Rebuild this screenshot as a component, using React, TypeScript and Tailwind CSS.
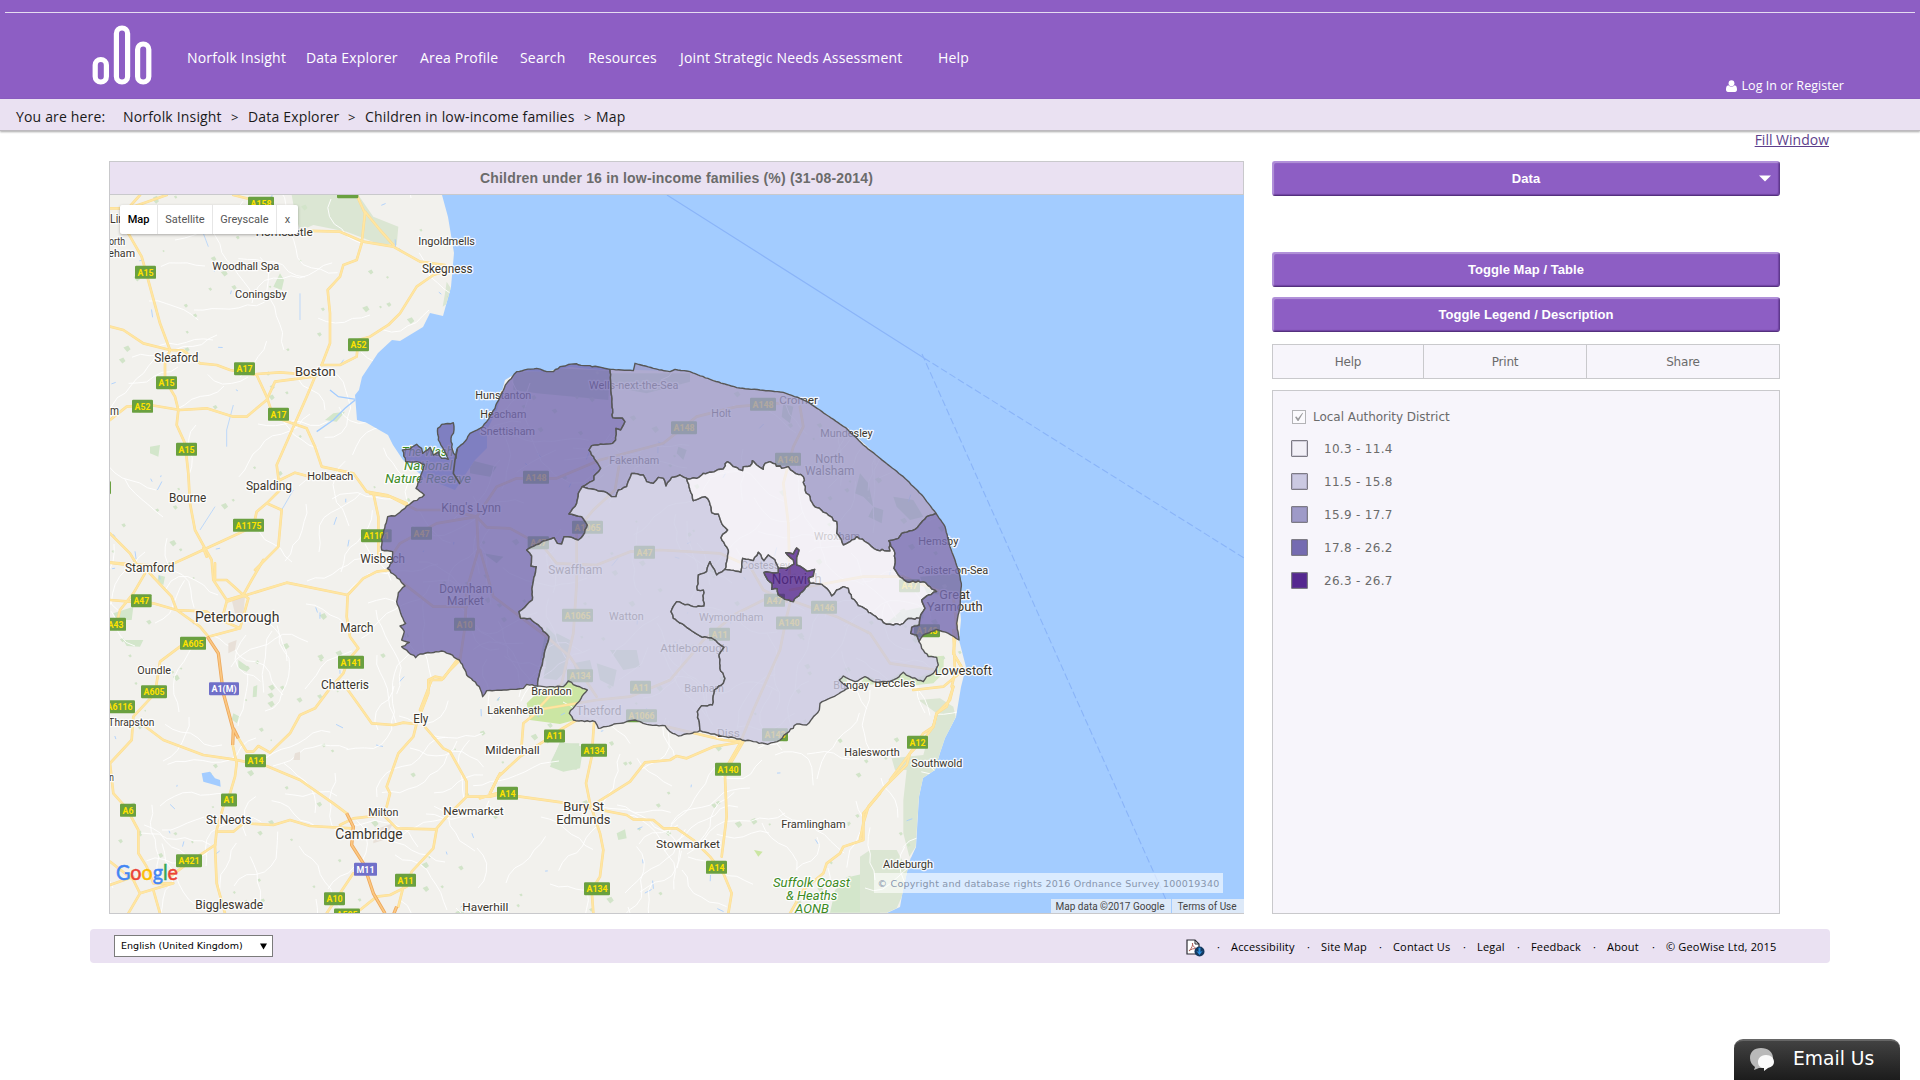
import React from "react";

type Pt = [number, number];

/* ---------- geometry helpers ---------- */

const rng = (seed: number) => {
  let s = seed;
  return () => {
    s = (s * 1664525 + 1013904223) % 4294967296;
    return s / 4294967296;
  };
};

const pts = (s: string): Pt[] =>
  s.trim().split(/\s+/).map((p) => p.split(",").map(Number) as Pt);

/* Adds small wobbles between surveyed points so borders look natural. */
const rough = (s: string, amp = 5): Pt[] => {
  const p = pts(s);
  const r = rng(p.length * 7919 + Math.abs(p[0][0]));
  const out: Pt[] = [p[0]];
  for (let i = 1; i < p.length; i++) {
    const [ax, ay] = p[i - 1];
    const [bx, by] = p[i];
    const n = Math.max(1, Math.floor(Math.hypot(bx - ax, by - ay) / 8));
    for (let k = 1; k < n; k++) {
      const t = k / n;
      out.push([ax + (bx - ax) * t + (r() - 0.5) * amp, ay + (by - ay) * t + (r() - 0.5) * amp]);
    }
    out.push(p[i]);
  }
  return out;
};
const rev = (p: Pt[]) => [...p].reverse();
const ring = (...e: Pt[][]) =>
  "M" + e.flat().map(([x, y]) => x.toFixed(1) + "," + y.toFixed(1)).join("L") + "Z";

/* ---------- district borders ---------- */

const westCoast = rough(
  "503,1008 470,1003 460,1015 430,1018 410,1020 350,1022 338,1040 328,1010 290,975 268,930 240,912 215,903 150,912 137,923 95,890 118,877 95,870 103,845 90,828 107,820 92,790 80,755 85,728 105,708 70,672 52,655 68,635 68,605 35,600 37,560 53,500 75,498 110,468 163,435 138,415 150,385 163,345 140,335 107,335 97,300 120,297 140,283 155,295 158,310 180,292 190,315 205,305 215,325 235,328 222,300 205,270 203,235 215,223 250,218 252,240 243,265 248,300 258,325 262,295 280,280 300,250 330,235 350,215 375,175 395,130 410,100 440,65 500,55 530,65 550,65 570,50 610,42 660,47 720,58",
  4
);
const westNorth = rough(
  "720,58 728,203 757,204 765,215 752,240 738,235 737,270 728,280 700,283 665,287 657,300 692,355 672,378 672,390 637,410",
  3
);
const westBreck = rough(
  "637,410 625,430 620,460 597,492 635,500 652,525 640,555 625,570 605,562 582,560 575,582 562,580 552,563 520,573 470,600 485,618 483,648 499,650 487,710 487,750 470,765 447,785 452,805 480,805 510,830 537,860 522,920 505,985 503,1008",
  3
);
const northCoast = rough(
  "720,58 790,62 795,40 850,55 900,65 915,58 960,65 1030,92 1100,113 1170,120 1240,127 1290,145 1320,160 1370,195 1430,235 1480,285 1530,325 1600,380 1660,440 1698,490",
  1.5
);
const northYar = rough("1698,490 1670,500 1635,538 1595,550 1585,565 1557,572", 3);
const northBroad = rough(
  "1557,572 1560,603 1520,600 1500,585 1460,560 1440,575 1420,585 1400,550 1400,515 1370,490 1330,465 1320,440 1305,420 1300,380 1270,365 1255,350 1235,355 1200,335 1185,340 1180,358 1160,345 1147,332 1140,348 1120,350 1118,362 1090,350 1072,335 1060,357 1000,370 980,385 950,385",
  6
);
const northBreck = rough(
  "950,385 930,375 905,382 888,408 880,385 865,382 850,400 830,395 820,375 785,370 770,410 745,420 738,440 725,440 710,428 637,410",
  3
);
const broadBreck = rough(
  "950,385 960,420 970,452 1005,440 1018,455 1025,488 1045,492 1055,520 1073,540 1053,563 1075,600 1065,658",
  4
);
const breckSouth = rough(
  "1065,658 1040,675 1020,635 1010,665 985,675 982,720 1000,720 1002,768 970,770 920,755 903,785 910,805 950,832 990,858 1030,867 1062,892 1047,915 1050,955 1065,985 1060,1000 1033,1020 1027,1065 995,1067 982,1085 990,1142",
  4
);
const breckFoot = rough(
  "990,1142 925,1158 900,1145 885,1127 830,1123 795,1110 750,1120 685,1135 675,1115 610,1110 598,1090 652,1020 620,1008 595,993 580,1010 540,1010 503,1008",
  4
);
const broadSouthW = rough("1065,658 1113,667 1118,625 1150,632 1165,607 1182,632 1195,615 1215,630 1225,655", 3);
const norwichN = rough(
  "1225,655 1250,655 1272,642 1270,630 1260,622 1247,608 1270,612 1280,594 1287,600 1280,622 1280,645 1300,655 1312,664 1334,658 1330,678 1315,685 1320,700",
  3
);
const norwichS = rough(
  "1320,700 1297,725 1270,755 1245,748 1225,735 1222,716 1205,718 1206,700 1193,690 1182,667 1200,667 1225,668 1225,655",
  4
);
const broadSouthE = rough(
  "1320,700 1355,703 1370,715 1385,738 1400,720 1420,710 1435,715 1445,745 1475,770 1510,795 1540,818 1570,825 1600,820 1615,805 1650,805",
  6
);
const broadYar = rough(
  "1557,572 1575,610 1572,655 1585,675 1610,695 1660,695 1700,725 1675,735 1655,750 1665,775 1650,805"
);
const yarSouth = rough("1650,805 1648,825 1625,832 1622,850 1640,855 1647,875", 3);
const yarFoot = rough("1647,875 1660,855 1700,838 1735,850 1767,870", 2);
const yarCoast = rough(
  "1698,490 1725,530 1740,590 1755,630 1766,665 1774,700 1770,770 1760,820 1767,870",
  1.5
);
const southFoot = rough(
  "1647,875 1655,895 1675,920 1700,922 1705,945 1690,970 1670,980 1660,995 1620,980 1600,967 1580,985 1550,995 1510,995 1485,980 1455,995 1420,978 1408,990 1435,1015 1400,1035 1350,1060 1348,1080 1310,1125 1280,1122 1250,1150 1230,1170 1193,1183 1150,1175 1110,1167 1040,1155 990,1142",
  4
);

const districts = [
  { fill: "#756bb1", d: ring(westCoast, westNorth, westBreck) },
  { fill: "#9e9ac8", d: ring(northCoast, northYar, northBroad, northBreck, rev(westNorth)) },
  { fill: "#cbc9e2", d: ring(broadBreck, breckSouth, breckFoot, rev(westBreck), rev(northBreck)) },
  { fill: "#f2f0f7", d: ring(rev(northBroad), broadYar, rev(broadSouthE), rev(norwichN), rev(broadSouthW), rev(broadBreck)) },
  { fill: "#cbc9e2", d: ring(broadSouthW, rev(norwichS), broadSouthE, yarSouth, southFoot, rev(breckSouth)) },
  { fill: "#756bb1", d: ring(yarCoast, rev(yarFoot), rev(yarSouth), rev(broadYar), rev(northYar)) },
  { fill: "#54278f", d: ring(norwichN, norwichS) },
];

/* ---------- map sheets: survey sheets at 3:1 ---------- */

const sheets: Record<string, Pt> = {
  nw: [100, 190],
  sw: [100, 560],
  west: [370, 350],
  north: [660, 350],
  mid: [540, 540],
  south: [480, 690],
  east: [860, 690],
};
const sheetTransform = (k: string) =>
  `translate(${sheets[k][0]} ${sheets[k][1]}) scale(0.33333)`;

const roads: [string, string][] = [
  ["nw", "M85,130L125,200L150,290L180,400L210,480L195,520L195,570L225,620L235,660L230,705L255,760L265,850L270,940L285,1020L315,1075L335,1110L340,1170L380,1230L430,1215"],
  ["nw", "M210,480L250,482L300,520L350,525L390,540L470,555L500,620L520,680L620,715L645,770L665,830L760,850L800,905L860,915L920,940"],
  ["nw", "M30,690L80,650L150,645L240,660L320,655L400,680L440,680L500,630L525,575L640,560M470,552L540,547L640,555M665,525L720,525L770,500L775,450L810,440L865,405L900,370L950,290L1000,255L1045,240"],
  ["nw", "M645,560L620,620L585,700L530,825L540,900L500,940L545,960L535,1070L465,1140M540,870L585,848L630,860M530,910L500,940L470,965L460,1010L385,1045L320,1075L265,1100L200,1130L30,1118"],
  ["nw", "M665,525L690,460L690,370L683,300L720,260L730,225L770,210L785,160L795,70L770,15M600,122L720,125L790,155L880,170L960,215L1035,225M795,65L840,120L880,165"],
  ["nw", "M30,410L70,420L130,460L210,480M30,1030L90,1090L120,1140M30,55L85,55L130,40L200,15M85,130L80,60L120,15M820,910L835,980L835,1110M310,1075L320,1100M400,15L460,30"],
  ["sw", "M135,40L100,100L60,150L50,190M140,30L215,110L230,150L300,200L325,230M30,120L90,125L160,130L230,150L320,155L340,170L420,205M325,230L420,205L445,115L430,105L380,60L345,60M30,8L120,20M345,10L345,60"],
  ["sw", "M398,555L410,610L405,650L390,700L370,740L350,810L345,860L350,970L375,1060M400,510L440,575L460,575L475,558L510,578L570,520L600,465L645,445L690,385L730,340L745,300L775,265L750,230L740,170L743,105L560,68L440,105L380,125L365,180M430,105L455,60L490,0"],
  ["sw", "M743,105L790,55L830,35L870,30M130,495L190,540L310,585L400,598L500,618L600,660L700,730L740,760M240,260L180,305L165,400L100,470L95,540L30,610L40,700L80,745L115,810L115,880L140,920L160,970L220,970L120,1000L85,1060M120,1000L100,960L30,905M160,990L180,1060"],
  ["sw", "M345,855L270,905L210,950M100,950L30,975M355,815L400,815L430,790L520,795L570,780L630,798L755,805M720,795L760,775L850,765L890,805L1010,808L1000,865L935,935L920,980L870,1005L830,1010L780,1050M910,980L895,1040"],
  ["sw", "M860,740L870,700L860,680L895,580L940,530L950,490L985,400L985,360L1005,350L1030,355L1075,295M970,495L1030,565L1050,575L1100,665L1100,710L1170,710L1230,695M1010,805L1040,770L1100,710M740,385L780,440L815,490L880,495L910,488L945,492M760,940L720,1000L680,1060M1200,640L1170,700"],
  ["west", "M0,430L60,440L110,465L140,480L230,480L320,500L350,532L420,535L520,590L560,640L680,645L780,605L870,600L1050,610L1140,650L1180,720L1250,755M320,500L325,600L290,720L285,830L270,930L240,960L215,990L185,990L150,1080"],
  ["west", "M70,610L90,580L200,520L320,500L380,410L440,385L560,385L690,330L880,280L980,200L1100,170L1280,155M750,330L735,420L670,480L620,540L620,700L610,850L575,1000L510,1070M100,700L190,770L290,770M330,600L370,740L450,800L530,860L600,920L680,1040"],
  ["west", "M500,1080L680,1050L780,1040L900,990L960,920L1000,870L1100,790L1200,740M1290,170L1300,230L1270,290L1240,400L1255,520L1260,700M1260,760L1250,800L1230,900L1150,1080L1110,1180L1070,1250M1260,750L1400,800L1500,850L1560,940L1700,960M1260,720L1480,680L1600,680L1750,740L1760,830L1750,910L1780,960"],
  ["mid", "M1240,340L1270,390L1210,440L1120,450M1240,440L1230,480L1190,520L1180,560L1150,600L1110,640L1050,720M1240,270L1245,400L1235,440"],
  ["south", "M342,100L335,200L318,280L330,340L360,430L370,480L360,560L335,600L340,670M0,325L50,310L120,320L250,338L440,375L460,388L520,390L550,415L590,415L640,450L690,500L730,550L755,610L745,670"],
  ["south", "M355,335L450,275L495,217L570,210L590,198L620,205L700,170L730,165L790,155L755,215L735,260L740,380L725,500M790,155L730,150L560,110M290,90L240,120L190,155L120,200L55,260L30,310M125,165L130,100L180,60M1200,310L1150,370L1150,450L1090,470L1080,490L1040,520L1030,550L970,600L930,670"],
  ["east", "M280,-10L260,50L230,70L220,110L190,130L150,190L140,225L75,290L25,350L10,400L0,450"],
];
const motorways: [string, string][] = [
  ["sw", "M322,230L355,280L370,400L400,510L398,555M400,505L415,535M740,760L760,800L755,855L790,910L820,1000L855,1060M890,1040L880,1065"],
];

const parks: [string, string, string][] = [
  ["nw", "#dbe6d3", "M575,15L775,15L820,80L895,110L890,165L830,160L740,125L640,105L600,122L585,70Z"],
  ["nw", "#dbe6d3", "M1040,275L1056,300L1050,335L1028,350L1035,310Z"],
  ["nw", "#d3e6cb", "M700,670L735,665L710,695L675,690Z M540,250L552,270L545,300L520,290Z M150,770L180,765L175,800L150,790Z"],
  ["sw", "#d3e6cb", "M40,160L100,140L95,180L50,180Z M70,240L130,240L120,260L80,258Z M415,300L450,325L440,335L415,325Z M460,380L472,375L470,410L458,412Z M175,45L195,50L190,75L172,65Z M400,460L420,470L410,490L395,478Z"],
  ["mid", "#cbe6a3", "M85,425L142,450L88,520L105,540L60,552L-30,540L-40,490L0,450Z"],
  ["mid", "#d6e9c4", "M1140,305L1165,350L1212,347L1210,400L1180,430L1110,437L1080,430L1030,432L960,435L975,408L1040,425L1090,393L1130,415L1190,390L1190,355L1160,340Z"],
  ["mid", "#d3e3cc", "M60,610L118,610L110,690L30,670Z M895,410L915,405L925,435L900,425Z"],
  ["mid", "#c9dfc0", "M1080,215L1150,200L1150,235L1040,250Z M80,380L0,360L20,260L60,300Z"],
  ["south", "#d3e6cb", "M240,155L310,170L300,235L250,245L210,230Z M410,430L435,418L440,445L415,450Z M1065,600L1110,560L1200,540V668H1050Z"],
  ["south", "#cbe6a3", "M822,480L848,485L835,500Z"],
  ["east", "#dbe6d3", "M175,30L240,25L280,50L287,80L240,190L225,240L190,265L177,320L167,470L148,500L130,430L130,330L140,240L105,240L95,205L190,195L210,120L230,70Z M30,480L110,480L145,545L130,610L110,655L80,668H0V500Z"],
  ["west", "#bcd6b8", "M560,850L600,870L590,960L560,990L520,985L535,900Z M340,610L400,620L380,640Z M300,330L380,350L360,380L300,370Z M680,940L740,960L730,1010L690,990Z M720,900L800,900L810,950L760,960Z M610,940L660,930L670,970L620,980Z"],
  ["west", "#c4d8c0", "M430,70L560,55L720,62L715,150L500,130L430,120Z M720,70L960,70L960,95L830,130L725,110Z"],
  ["north", "#bcd6b8", "M600,370L625,400L640,470L610,440L585,430Z M640,470L670,480L665,520L625,500Z M700,440L760,450L790,500L750,510L710,470Z M370,160L400,170L390,220L365,200Z M55,290L80,300L70,330L50,310Z M780,680L900,670L900,740L800,730Z"],
];

/* Minor lanes, copses and ponds scattered over the countryside. */
const rnd = rng(20140831);
const lanes: string[] = [];
for (let i = 0; i < 330; i++) {
  let x = 100 + rnd() * 870;
  let y = 190 + rnd() * 730;
  let a = rnd() * Math.PI * 2;
  let d = `M${x.toFixed(0)},${y.toFixed(0)}`;
  const n = 5 + Math.floor(rnd() * 7);
  for (let k = 0; k < n; k++) {
    a += (rnd() - 0.5) * 1.1;
    x += Math.cos(a) * 9;
    y += Math.sin(a) * 9;
    d += `L${x.toFixed(1)},${y.toFixed(1)}`;
  }
  lanes.push(d);
}
const blob = (size: number) => {
  const x = 110 + rnd() * 850;
  const y = 195 + rnd() * 718;
  const s = 1 + rnd() * size;
  return `M${x.toFixed(1)},${y.toFixed(1)}l${(s * 1.4).toFixed(1)},${(-s * 0.6).toFixed(1)}l${(s * 0.7).toFixed(1)},${(s * 1.1).toFixed(1)}l${(-s).toFixed(1)},${(s * 0.8).toFixed(1)}z`;
};
const copses = Array.from({ length: 330 }, () => blob(2.6)).join("");
const streams = Array.from({ length: 110 }, () => {
  const x = 110 + rnd() * 850;
  const y = 195 + rnd() * 718;
  return `M${x.toFixed(1)},${y.toFixed(1)}l${(rnd() * 9 - 2).toFixed(1)},${(rnd() * 14 - 9).toFixed(1)}`;
}).join("");

const landPath =
  "M110,195L442,195L448,217L454,253L451,287L443,316L430,313L423,327L400,341L392,340L378,353L362,377L359,390L355,395L357,420L367,423L388,435L393,445L403,460L425,478L455,490L475,460L487,448L487,430L497,410L505,380L520,371L545,372L570,367L600,370L636,370L675,371L690,372L737,388L783,392L810,403L847,428L880,458L903,477L923,497L936,513L945,527L955,560L961,583L960,607L961,620L959,640L966,667L961,687L956,717L945,738L940,753L935,770L923,778L919,797L918,813L916,847L910,860L907,872L903,890L900,907L887,913L110,913Z";

type Label = [string, string, number, number, number, number?];
const labels: Label[] = [
  ["nw", "Lin", 30, 72, 97, 12], ["nw", "orth", 27, 75, 165], ["nw", "eham", 25, 105, 200],
  ["nw", "Horncastle", 467, 638, 138], ["nw", "Woodhall Spa", 337, 538, 240], ["nw", "Coningsby", 405, 560, 324],
  ["nw", "Ingoldmells", 955, 1125, 165], ["nw", "Skegness", 966, 1118, 249, 12], ["nw", "Sleaford", 163, 295, 516, 12],
  ["nw", "Boston", 585, 707, 556, 13.5], ["nw", "Spalding", 438, 576, 898, 12], ["nw", "Holbeach", 622, 760, 869],
  ["nw", "Bourne", 207, 319, 936, 12], ["nw", "Stamford", 75, 223, 1145, 12], ["nw", "Wisbech", 781, 915, 1118, 12], ["nw", "m", 30, 57, 675, 12],
  ["sw", "Peterborough", 285, 538, 186, 14], ["sw", "March", 721, 820, 216, 12], ["sw", "Oundle", 112, 213, 341],
  ["sw", "Chatteris", 663, 807, 387, 12], ["sw", "Ely", 940, 985, 489, 12], ["sw", "Thrapston", 25, 163, 497],
  ["sw", "Milton", 805, 895, 767], ["sw", "n", 28, 42, 662], ["sw", "Newmarket", 1030, 1211, 765],
  ["sw", "St Neots", 318, 454, 791, 12], ["sw", "Cambridge", 706, 908, 837, 14], ["sw", "Biggleswade", 286, 489, 1046, 12], ["sw", "Haverhill", 1087, 1225, 1052],
  ["west", "Hunstanton", 316, 484, 145], ["west", "Heacham", 331, 469, 202], ["west", "Snettisham", 331, 495, 254],
  ["west", "Wells-next-the-Sea", 657, 925, 116], ["west", "Fakenham", 718, 868, 341], ["west", "King's Lynn", 214, 393, 486, 12],
  ["west", "Swaffham", 535, 697, 671, 12], ["west", "Watton", 717, 821, 808], ["west", "Downham", 208, 367, 729, 12], ["west", "Market", 231, 342, 765, 12],
  ["west", "Brandon", 484, 605, 1033],
  ["north", "Cromer", 358, 474, 161], ["north", "Holt", 154, 213, 201], ["north", "Mundesley", 481, 638, 259],
  ["north", "North", 466, 552, 339, 12], ["north", "Walsham", 435, 583, 375, 12], ["north", "Wroxham", 462, 600, 568],
  ["north", "Hemsby", 775, 895, 584], ["north", "Costessey", 243, 390, 656], ["north", "Norwich", 335, 485, 702, 14],
  ["north", "Caister-on-Sea", 772, 985, 670], ["north", "Great", 838, 930, 745, 13], ["north", "Yarmouth", 800, 968, 781, 13],
  ["mid", "Wymondham", 477, 670, 241], ["mid", "Attleborough", 361, 565, 335], ["mid", "Banham", 433, 552, 455],
  ["mid", "Thetford", 109, 244, 525, 12], ["mid", "Diss", 531, 600, 589], ["mid", "Bungay", 880, 987, 447],
  ["mid", "Beccles", 1003, 1126, 441], ["mid", "Lowestoft", 1184, 1356, 403, 13.5], ["mid", "Halesworth", 913, 1079, 647], ["mid", "Southwold", 1114, 1267, 680],
  ["south", "Lakenheath", 22, 190, 71], ["south", "Mildenhall", 16, 179, 191], ["south", "Bury St", 250, 372, 362, 13],
  ["south", "Edmunds", 229, 391, 400, 13], ["south", "Stowmarket", 528, 720, 474], ["south", "Framlingham", 904, 1097, 413],
  ["east", "Aldeburgh", 69, 219, 533],
];
const reserveLabels: Label[] = [
  ["nw", "The Wash", 905, 1060, 798], ["nw", "National", 912, 1058, 838], ["nw", "Nature Reserve", 855, 1113, 877],
  ["south", "Suffolk Coast", 879, 1110, 591], ["south", "& Heaths", 918, 1072, 630], ["south", "AONB", 945, 1047, 668],
];

type Shield = [string, string, number, number, number, boolean?];
const shields: Shield[] = [
  ["nw", "A158", 444, 522, 40], ["nw", "", 711, 775, 5], ["nw", "A15", 105, 168, 247], ["nw", "A52", 744, 807, 464],
  ["nw", "A17", 402, 465, 536], ["nw", "A15", 168, 231, 578], ["nw", "A52", 96, 159, 649], ["nw", "A17", 504, 567, 673],
  ["nw", "A15", 228, 291, 778], ["nw", "A1175", 399, 492, 1006], ["nw", "A1101", 783, 875, 1037], ["nw", "A47", 933, 996, 1030], ["nw", "", 10, 33, 893],
  ["sw", "A47", 93, 155, 122], ["sw", "A43", 16, 78, 193], ["sw", "A605", 240, 318, 250], ["sw", "A1(M)", 327, 417, 386, true],
  ["sw", "A605", 123, 201, 395], ["sw", "A6116", 12, 105, 440], ["sw", "A141", 714, 792, 307], ["sw", "A14", 435, 498, 602],
  ["sw", "A1", 363, 411, 720], ["sw", "A6", 60, 108, 751], ["sw", "A421", 228, 306, 902], ["sw", "M11", 762, 831, 928, true],
  ["sw", "A11", 885, 948, 961], ["sw", "A10", 672, 735, 1016], ["sw", "A505", 702, 780, 1065], ["sw", "A10", 1062, 1125, 193],
  ["west", "A148", 459, 537, 382], ["west", "A1065", 606, 699, 532], ["west", "A47", 473, 537, 578], ["west", "A47", 792, 855, 607],
  ["west", "A1065", 576, 669, 796], ["west", "A134", 591, 669, 977], ["west", "A11", 780, 843, 1012],
  ["north", "A148", 33, 111, 233], ["north", "A148", 270, 348, 163], ["north", "A140", 345, 423, 328], ["north", "A47", 717, 780, 707],
  ["north", "A47", 312, 375, 751], ["north", "A146", 453, 531, 772],
  ["mid", "A140", 708, 786, 249], ["mid", "A11", 507, 570, 283], ["mid", "A1066", 258, 351, 527], ["mid", "A143", 666, 744, 584],
  ["mid", "A11", 12, 75, 588], ["mid", "A134", 123, 201, 631], ["mid", "A140", 525, 603, 688], ["mid", "A12", 1101, 1164, 607], ["mid", "A143", 1122, 1200, 272],
  ["south", "A14", 51, 114, 310], ["south", "A134", 312, 390, 596], ["south", "A14", 678, 741, 532],
];

const placed = (k: string, x: number, y: number): Pt => [sheets[k][0] + x / 3, sheets[k][1] + y / 3];

function MapLabel({ l, green }: { l: Label; green?: boolean }) {
  const [x, y] = placed(l[0], l[2], l[4]);
  return (
    <text
      x={x}
      y={y + 0.4}
      fontSize={green ? 12.5 : l[5] ?? 11}
      textLength={(l[3] - l[2]) / 3}
      lengthAdjust="spacingAndGlyphs"
      fill={green ? "#3d8b1f" : "#3a352c"}
      fontStyle={green ? "italic" : "normal"}
      stroke="#ffffff"
      strokeWidth={2.6}
      strokeOpacity={0.85}
      strokeLinejoin="round"
      paintOrder="stroke"
    >
      {l[1]}
    </text>
  );
}

function MapDrawing() {
  return (
    <svg
      className="block h-[718px] w-[1134px] max-w-none"
      viewBox="110 195 1134 718"
      fontFamily="Roboto, sans-serif"
    >
      <defs>
        <clipPath id="land">
          <path d={landPath} />
        </clipPath>
      </defs>
      <rect x="110" y="195" width="1134" height="718" fill="#a3ccff" />
      <path d={landPath} fill="#f2f1ed" />
      <g clipPath="url(#land)">
        {parks.map(([k, fill, d], i) => (
          <path key={i} d={d} fill={fill} transform={sheetTransform(k)} />
        ))}
        <path d={copses} fill="#d2e4c9" />
        <path d={streams} stroke="#a3ccff" strokeWidth="0.8" fill="none" />
        <path d={lanes.join("")} stroke="#ffffff" strokeWidth="0.9" fill="none" strokeLinejoin="round" />
        <g transform={sheetTransform("sw")}>
          <path d="M305,640L330,635L345,655L360,660L362,680L345,675L310,665Z" fill="#a3ccff" />
          <path d="M395,120L435,110L430,165L405,160Z M385,250L410,240L405,270L385,280Z M820,810L880,790L850,840L820,850Z M585,580L600,575L600,600L580,600Z" fill="#e8e0d8" />
        </g>
        <g transform={sheetTransform("nw")} stroke="#a3ccff" fill="none">
          <path d="M650,725L700,690L735,655L768,628L715,620L690,600" strokeWidth="4" />
          <path d="M380,770L380,720L400,645M300,1020L345,950M545,960L580,900M600,310L600,390M310,130L325,170" strokeWidth="2" />
        </g>
        {roads.map(([k, d], i) => (
          <path key={i} d={d} transform={sheetTransform(k)} fill="none" stroke="#fbdc94" strokeWidth="8" strokeLinejoin="round" strokeLinecap="round" />
        ))}
        {roads.map(([k, d], i) => (
          <path key={i} d={d} transform={sheetTransform(k)} fill="none" stroke="#ffe6a2" strokeWidth="5" strokeLinejoin="round" strokeLinecap="round" />
        ))}
        {motorways.map(([k, d], i) => (
          <g key={i} transform={sheetTransform(k)} fill="none" strokeLinejoin="round">
            <path d={d} stroke="#eda85c" strokeWidth="10" />
            <path d={d} stroke="#fbc883" strokeWidth="5" />
          </g>
        ))}
      </g>
      <g fill="none" stroke="#8ab4f8" strokeWidth="1.1">
        <path d="M667,195L924,358" />
        <path d="M924,358L1244,558M922,354L1167,902" strokeDasharray="7 3" />
      </g>
      {shields.map(([k, t, x0, x1, yc, m], i) => {
        const [x, y] = placed(k, x0, yc);
        const w = (x1 - x0) / 3;
        return (
          <g key={i}>
            <rect x={x} y={y - 6.5} width={w} height="13" rx="1.2" fill={m ? "#7070c9" : "#6aa040"} />
            {t && (
              <text x={x + w / 2} y={y + 3.4} fontSize="9.5" fontWeight="700" textAnchor="middle" textLength={w - 5} lengthAdjust="spacingAndGlyphs" fill={m ? "#ffffff" : "#ffe200"}>
                {t}
              </text>
            )}
          </g>
        );
      })}
      {labels.map((l, i) => (
        <MapLabel key={i} l={l} />
      ))}
      {reserveLabels.map((l, i) => (
        <MapLabel key={i} l={l} green />
      ))}
      <g transform={sheetTransform("west")} stroke="#575757" strokeWidth="4.2" strokeLinejoin="round">
        {districts.map((s, i) => (
          <path key={i} d={s.d} fill={s.fill} fillOpacity="0.8" />
        ))}
        <path d="M262,297L255,330L250,370L270,402" fill="none" strokeWidth="5" />
      </g>
      <text x="116" y="880" fontFamily="Lato, sans-serif" fontSize="21" textLength="62" lengthAdjust="spacingAndGlyphs" strokeWidth="0.5">
        <tspan fill="#4285f4" stroke="#4285f4">G</tspan>
        <tspan fill="#ea4335" stroke="#ea4335">o</tspan>
        <tspan fill="#fbbc05" stroke="#fbbc05">o</tspan>
        <tspan fill="#4285f4" stroke="#4285f4">g</tspan>
        <tspan fill="#34a853" stroke="#34a853">l</tspan>
        <tspan fill="#ea4335" stroke="#ea4335">e</tspan>
      </text>
    </svg>
  );
}

/* ---------- page ---------- */

function Logo() {
  return (
    <svg className="mt-[11px] ml-[92px] h-[62px] w-[62px]" viewBox="92 24 62 62" fill="none" stroke="#fff" strokeWidth="5.2">
      <rect x="95.2" y="59.5" width="11.2" height="22.5" rx="5.6" />
      <rect x="116.4" y="28" width="11.2" height="54" rx="5.6" />
      <rect x="137.6" y="44" width="11.2" height="38" rx="5.6" />
    </svg>
  );
}

function Header() {
  return (
    <header className="h-[99px] bg-[#8d5ec4] pt-[12px] font-['Open_Sans',sans-serif] text-white">
      <div className="mx-[5px] h-px bg-[#e6dcf1]" />
      <div className="flex h-[86px]">
        <Logo />
        <nav className="ml-[33px] flex pt-[35px] text-[14px] leading-[20px] tracking-[0.19px] whitespace-nowrap">
          <a className="w-[119px]">Norfolk Insight</a>
          <a className="w-[114px]">Data Explorer</a>
          <a className="w-[100px]">Area Profile</a>
          <a className="w-[68px]">Search</a>
          <a className="w-[92px]">Resources</a>
          <a className="w-[258px]">Joint Strategic Needs Assessment</a>
          <a>Help</a>
        </nav>
        <div className="mr-[76px] ml-auto flex items-center gap-[5px] self-end pb-[3px] text-[12.5px] leading-[20px] tracking-[0.05px]">
          <svg className="h-[12px] w-[11px]" viewBox="0 0 11 12" fill="#fff">
            <circle cx="5.5" cy="3.2" r="2.9" />
            <path d="M2.4,5.2C0.6,5.6 0,7 0,9.6C0,11 0.7,12 2,12H9C10.3,12 11,11 11,9.6C11,7 10.4,5.6 8.6,5.2C7.6,7 3.4,7 2.4,5.2Z" />
          </svg>
          <span>Log In or Register</span>
        </div>
      </div>
    </header>
  );
}

function Breadcrumb() {
  return (
    <div className="flex h-[32px] border-b border-[#bdbabf] bg-[#eae1f2] pl-[16px] font-['Open_Sans',sans-serif] text-[14px] leading-[36px] tracking-[0.17px] whitespace-nowrap text-[#1a1a1a] shadow-[0_1px_2px_rgba(0,0,0,0.35)]">
      <span className="w-[107px]">You are here:</span>
      <span className="w-[108px]">Norfolk Insight</span>
      <span className="w-[17px] text-[13px]">&gt;</span>
      <span className="w-[100px]">Data Explorer</span>
      <span className="w-[17px] text-[13px]">&gt;</span>
      <span className="w-[219px]">Children in low-income families</span>
      <span className="w-[12px] text-[13px]">&gt;</span>
      <span>Map</span>
    </div>
  );
}

function PurpleButton({ label, arrow }: { label: string; arrow?: boolean }) {
  return (
    <button className="relative block h-[35px] w-[508px] rounded-[3px] border border-t-[#b191da] border-r-[#5f3a8c] border-b-[#54307e] border-l-[#b191da] bg-[#8d5ec4] pt-px text-center font-['Liberation_Sans',sans-serif] text-[13px] font-bold tracking-[0.05px] text-white shadow-[inset_1px_1px_1px_rgba(255,255,255,0.35),inset_-1px_-1px_1px_rgba(60,20,100,0.35)]">
      {label}
      {arrow && (
        <svg className="absolute top-[13px] right-[8px] h-[7px] w-[12px]" viewBox="0 0 12 7">
          <path d="M0,0.5H12L6,6.5Z" fill="#fff" />
        </svg>
      )}
    </button>
  );
}

const legend = [
  ["bg-[#f2f0f7]", "10.3 - 11.4"],
  ["bg-[#cbc9e2]", "11.5 - 15.8"],
  ["bg-[#9e9ac8]", "15.9 - 17.7"],
  ["bg-[#756bb1]", "17.8 - 26.2"],
  ["bg-[#54278f]", "26.3 - 26.7"],
];

function SidePanel() {
  return (
    <aside className="ml-[28px] flex w-[508px] flex-col font-['DejaVu_Sans',sans-serif] text-[#6b6b6b]">
      <PurpleButton label="Data" arrow />
      <div className="mt-[56px]" />
      <PurpleButton label="Toggle Map / Table" />
      <div className="mt-[10px]" />
      <PurpleButton label="Toggle Legend / Description" />
      <div className="mt-[12px] flex h-[35px] border border-[#c9c9cc] bg-[#f7f5fb] text-center text-[12px] leading-[35px] tracking-[-0.2px]">
        <span className="w-[151px] border-r border-[#c9c9cc]">Help</span>
        <span className="w-[163px] border-r border-[#c9c9cc]">Print</span>
        <span className="flex-1">Share</span>
      </div>
      <div className="mt-[11px] h-[524px] border border-[#c9c9cc] bg-[#f7f5fb] pt-[18px] pl-[18px]">
        <div className="flex h-[16px] items-center gap-[7px] pl-px">
          <span className="flex h-[14px] w-[14px] items-center justify-center border border-[#b3b3b6] bg-[#fbfafd]">
            <svg className="h-[10px] w-[10px]" viewBox="0 0 10 10">
              <path d="M1,5L2.5,4.5L4,6.5L8.5,0.8L9,1.3L4.5,9H3.6Z" fill="#9a9a9c" />
            </svg>
          </span>
          <span className="text-[12px] tracking-[-0.03px]">Local Authority District</span>
        </div>
        <ul className="mt-[15px] flex flex-col gap-[16px]">
          {legend.map(([bg, t]) => (
            <li key={t} className="flex h-[17px] items-center">
              <span className={`h-[17px] w-[17px] rounded-[1px] border border-[#7d7b85] shadow-[inset_0_0_0_1px_rgba(110,105,130,0.25)] ${bg}`} />
              <span className="ml-[16px] text-[12px] tracking-[0.3px]">{t}</span>
            </li>
          ))}
        </ul>
      </div>
    </aside>
  );
}

function MapPanel() {
  return (
    <section className="h-[753px] w-[1135px] border-b border-l border-[#c9c9cc]">
      <h1 className="h-[34px] border-t border-r border-b border-[#c9c9cc] bg-[#eae1f2] text-center font-['Liberation_Sans',sans-serif] text-[14px] leading-[33px] font-bold tracking-[0.18px] text-[#6b6b6b]">
        Children under 16 in low-income families (%) (31-08-2014)
      </h1>
      <div className="relative h-[718px] w-[1134px] overflow-hidden">
        <MapDrawing />
        <div className="absolute top-[10px] left-[10px] flex h-[29px] rounded-[2px] bg-white text-center font-[Roboto,sans-serif] text-[11px] leading-[29px] text-[#565656] shadow-[0_1px_3px_rgba(0,0,0,0.3)]">
          <span className="w-[38px] border-r border-[#e6e6e6] font-medium text-black">Map</span>
          <span className="w-[55px] border-r border-[#e6e6e6]">Satellite</span>
          <span className="w-[64px] border-r border-[#e6e6e6] tracking-[0.05px]">Greyscale</span>
          <span className="w-[21px]">x</span>
        </div>
        <div className="absolute right-[21px] bottom-[20px] h-[20px] w-[349px] bg-white/60 text-center font-['DejaVu_Sans',sans-serif] text-[9.5px] leading-[22px] tracking-[0.24px] whitespace-nowrap text-[#8795ad]">
          © Copyright and database rights 2016 Ordnance Survey 100019340
        </div>
        <div className="absolute right-0 bottom-0 flex h-[14px] gap-px text-center font-[Roboto,sans-serif] text-[10px] leading-[15px] text-[#444]">
          <span className="w-[120px] bg-[#f5f5f5]/70 pr-[2px]">Map data ©2017 Google</span>
          <span className="w-[72px] bg-[#f5f5f5]/70 pr-[2px]">Terms of Use</span>
        </div>
      </div>
    </section>
  );
}

function Footer() {
  const links: [string, string][] = [
    ["Accessibility", "w-[90px]"],
    ["Site Map", "w-[72px]"],
    ["Contact Us", "w-[84px]"],
    ["Legal", "w-[54px]"],
    ["Feedback", "w-[76px]"],
    ["About", "w-[59px]"],
  ];
  return (
    <footer className="mt-[15px] ml-[90px] flex h-[34px] w-[1740px] items-center rounded-[4px] bg-[#eae1f2] font-['Open_Sans',sans-serif] text-[11px] tracking-[0.17px] text-black">
      <div className="ml-[24px] flex h-[22px] w-[159px] items-center justify-between border border-[#7b7b7b] bg-white pt-px pr-[5px] pl-[6px] font-['DejaVu_Sans',sans-serif] text-[9.5px] tracking-[0.03px]">
        <span>English (United Kingdom)</span>
        <svg className="h-[7px] w-[7px]" viewBox="0 0 7 7">
          <path d="M0,0.5H7L3.5,6.5Z" />
        </svg>
      </div>
      <svg className="mt-[4px] ml-[913px] h-[18px] w-[19px]" viewBox="0 0 19 18">
        <path d="M1,1H9L13,5V15H1Z" fill="#fff" stroke="#2d2d35" strokeWidth="1.2" />
        <path d="M9,1V5H13" fill="none" stroke="#2d2d35" />
        <path d="M3,12C6,9 7,6 6.5,4C6,6 8,9 12,10C8,9 5,10 3,12" fill="none" stroke="#b0605a" strokeWidth="1" />
        <circle cx="13.5" cy="12.5" r="5" fill="#14395f" />
        <path d="M10,11.5L12.5,13V8.8H14.5V13L17,11.5L13.5,16Z" fill="#2a8fe0" />
      </svg>
      <div className="ml-[12px] flex items-center pt-[2px] whitespace-nowrap">
        <span className="w-[14px]">·</span>
        {links.map(([t, w]) => (
          <span key={t} className={`flex justify-between pr-[11px] ${w}`}>
            <span>{t}</span>
            <span>·</span>
          </span>
        ))}
        <span>© GeoWise Ltd, 2015</span>
      </div>
    </footer>
  );
}

export default function App() {
  return (
    <div className="relative flex h-[1080px] w-[1920px] flex-col overflow-hidden bg-white">
      <Header />
      <Breadcrumb />
      <div className="flex h-[30px] justify-end pr-[91px] font-['Open_Sans',sans-serif] text-[14px] leading-[18px] text-[#5d3f8c]">
        <a className="underline">Fill Window</a>
      </div>
      <main className="flex pl-[109px]">
        <MapPanel />
        <SidePanel />
      </main>
      <Footer />
      <div className="absolute right-[20px] bottom-0 flex h-[41px] w-[166px] items-center rounded-t-[9px] border-t-2 border-[#666] bg-linear-to-b from-[#424242] to-[#1c1c1c] pb-[2px] pl-[15px] font-['DejaVu_Sans',sans-serif] text-[18.7px] text-white">
        <svg className="mr-[18px] h-[25px] w-[26px]" viewBox="0 0 26 25">
          <path d="M12,1C5,1 1,5 1,11C1,15 3,18 6,20L5,23L10,21H12C19,21 24,17 24,11C24,5 19,1 12,1Z" fill="#b9b9b9" />
          <path d="M17,8C11,8 9,12 9,15C9,19 12,21 15,21L15,24L19,21C23,20 25,18 25,15C25,11 22,8 17,8Z" fill="#fafafa" />
        </svg>
        Email Us
      </div>
    </div>
  );
}
